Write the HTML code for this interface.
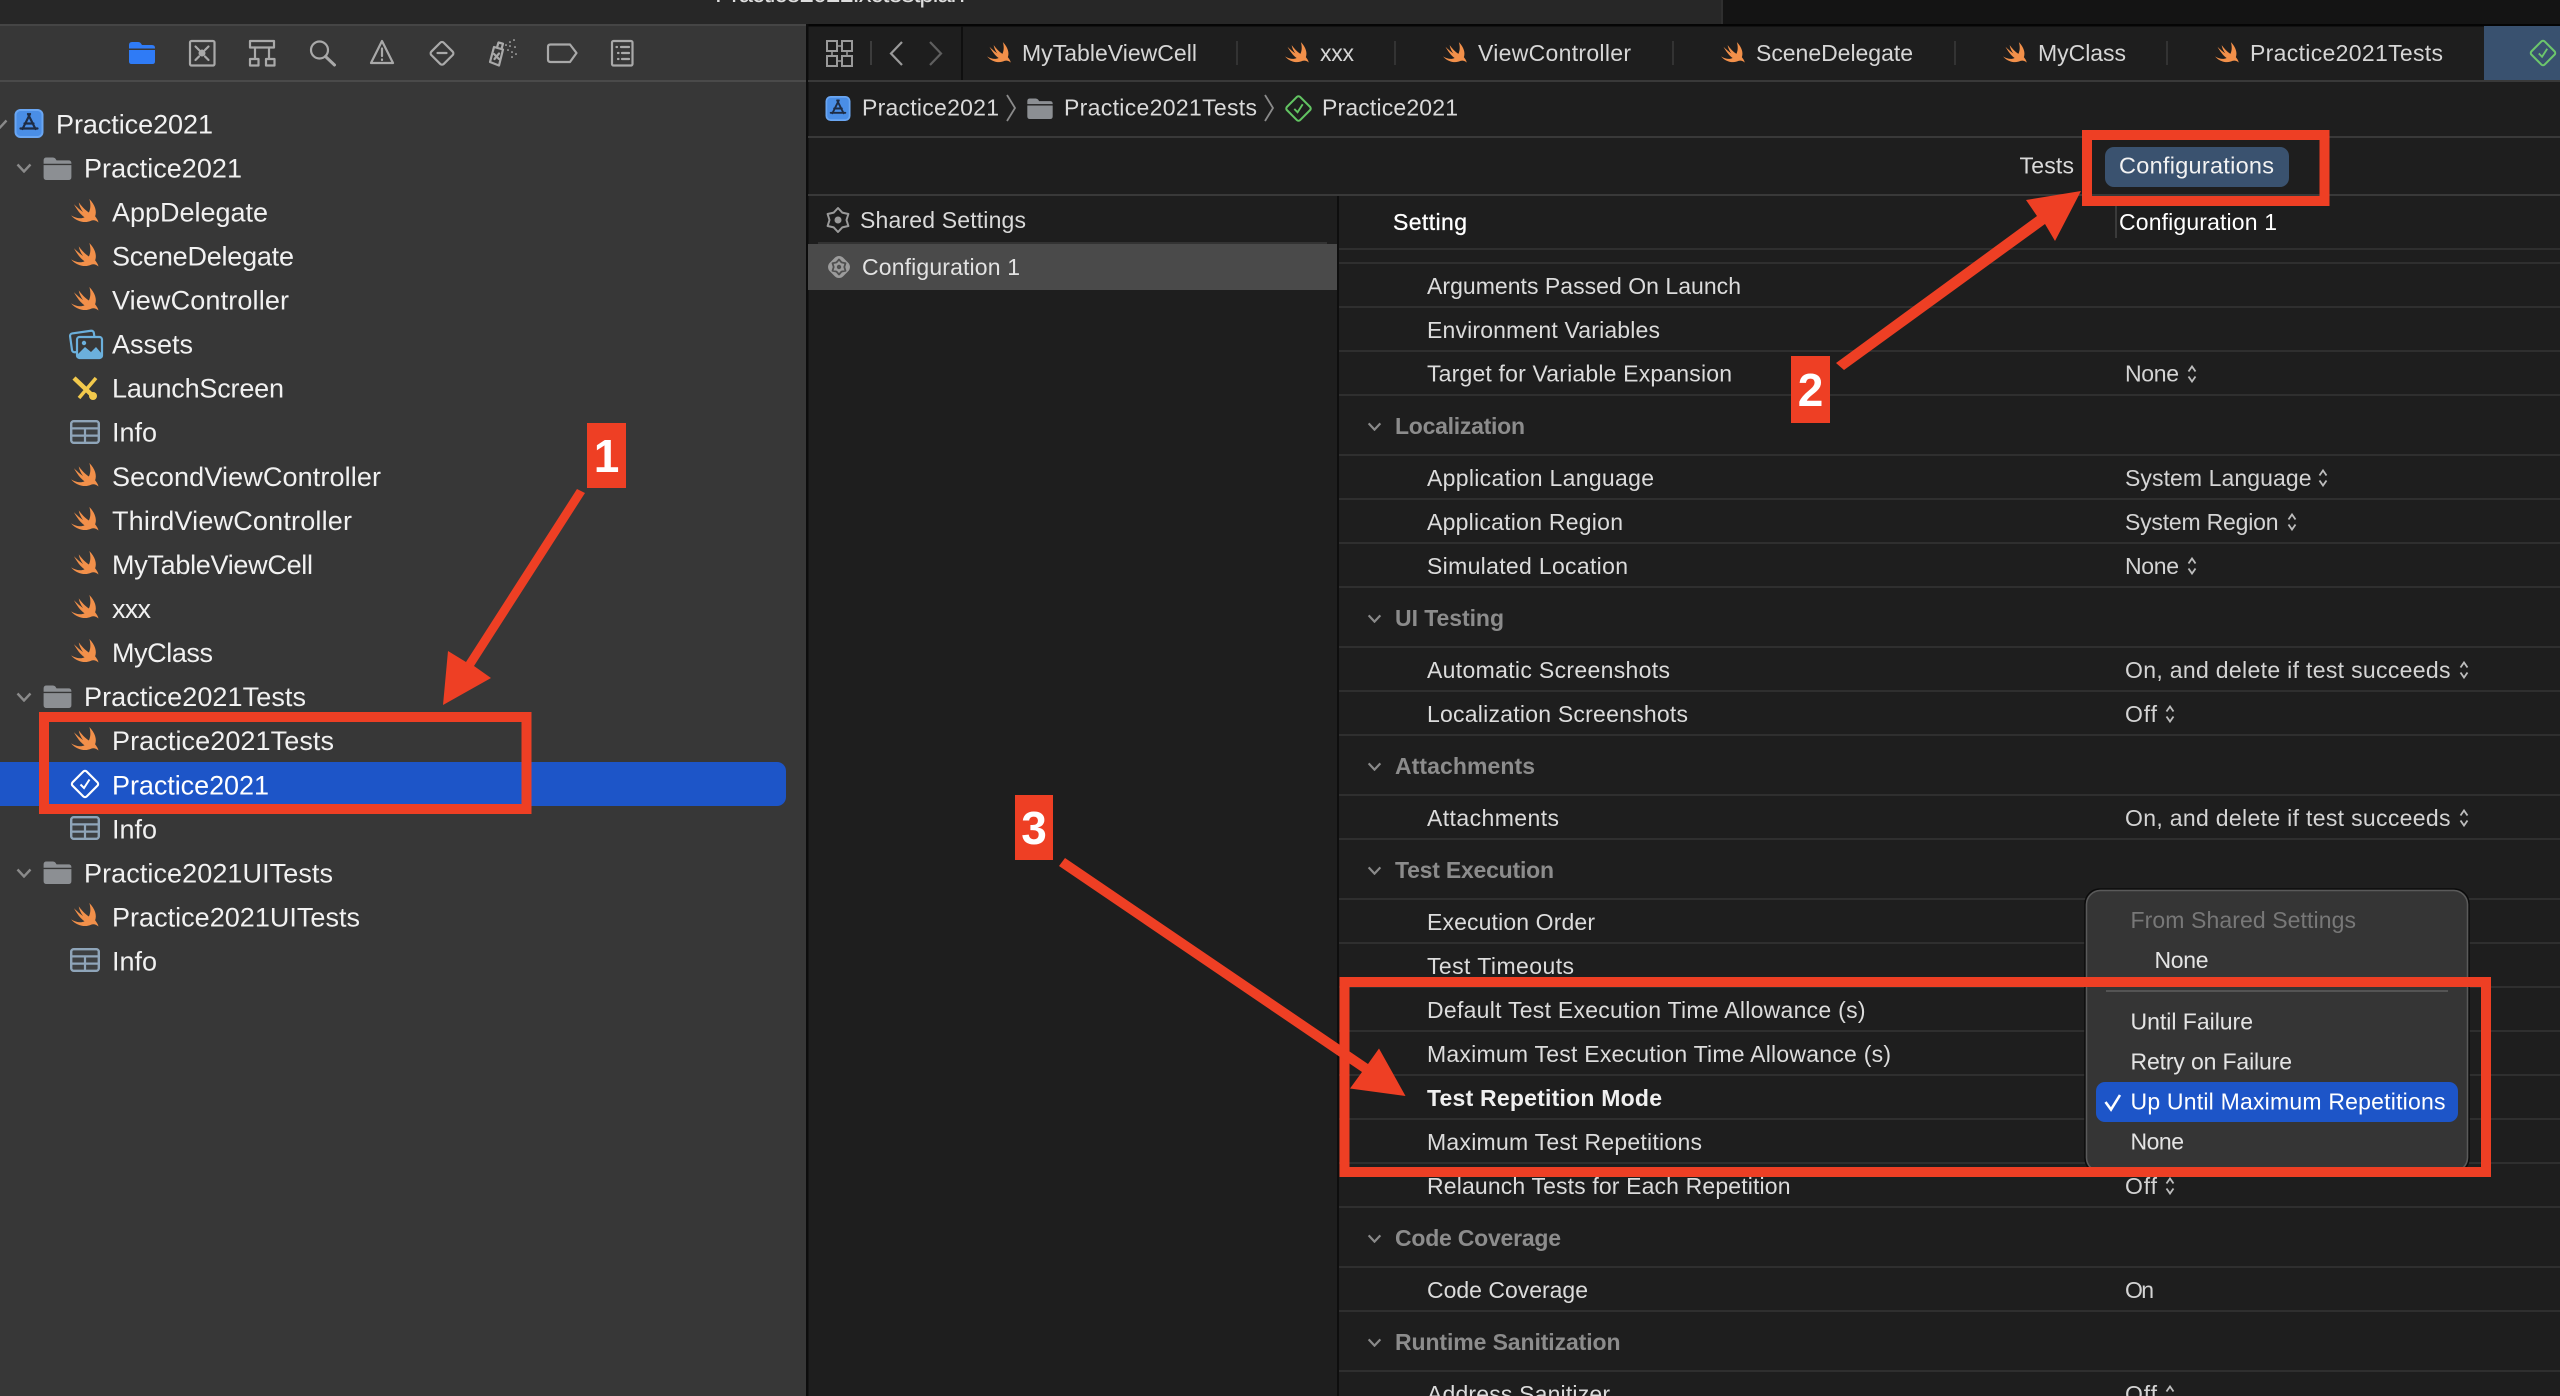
<!DOCTYPE html>
<html lang="en"><head><meta charset="utf-8"><title>Practice2021.xctestplan</title>
<style>
html,body{margin:0;padding:0;background:#1e1e1e;width:2560px;height:1396px;overflow:hidden}
svg{display:block}
text{font-family:"Liberation Sans",sans-serif}
.s{font-size:27px;fill:#f1f1f1}
.t{font-size:23px;fill:#d6d6d6}
.b{font-size:23px;fill:#dadada}
.r{font-size:23px;fill:#dcdcdc}
.h{font-size:23px;fill:#8c8c8c;font-weight:bold}
.v{font-size:23px;fill:#d4d4d4}
.m{font-size:23px;fill:#e4e4e4}
.tb{stroke:#a9a9a9;stroke-width:2.2;fill:none;stroke-linejoin:round;stroke-linecap:round}
.ln{fill:#2f2f2f}
</style></head><body>
<svg xmlns="http://www.w3.org/2000/svg" width="2560" height="1396" viewBox="0 0 2560 1396">
<defs>
<symbol id="swift" viewBox="0 0 30 26"><path fill="#f2904a" d="M19 0C25 6 27 13 25 18C26.5 20 28 22 28.5 24.5C26.5 22.5 23.5 21.5 21 22.5C15 25.5 6 24 0 17C5 20 10 21 14 19C10 16.5 6 11 3 5.5C6.5 9 10 12 12.5 13.5C10.5 11 8.5 7 8 3.5C11 7.5 14.5 11.5 18.5 14C20.5 10 20.5 5 19 0Z"/></symbol>
<symbol id="folder" viewBox="0 0 29 24"><path fill="#8c8f93" d="M0 3.5Q0 0.5 3 0.5H9.5Q11.5 0.5 12.5 2L13.5 3.5H26Q29 3.5 29 6.5V7H0ZM0 8.5H29V21Q29 24 26 24H3Q0 24 0 21Z"/></symbol>
<symbol id="info" viewBox="0 0 30 24"><rect x="1.2" y="1.2" width="27.6" height="21.6" rx="2.5" fill="#4a525a" fill-opacity=".35" stroke="#8fa5b9" stroke-width="2.4"/><path d="M1 8.4H29M1 15.6H29M15 8.4V23" stroke="#8fa5b9" stroke-width="2.2" fill="none"/></symbol>
<symbol id="app" viewBox="0 0 29 29"><rect x="1" y="1" width="27" height="27" rx="5" fill="#4a8ee6" stroke="#6aa6f2" stroke-width="2"/><path d="M15.5 5L8 20M13.5 5L21 20M6 19.5H23M10 14.5H19" stroke="#1e2c44" stroke-width="2.2" fill="none" stroke-linecap="round"/></symbol>
<symbol id="diamond" viewBox="0 0 30 30"><rect x="5" y="5" width="20" height="20" rx="2.5" transform="rotate(45 15 15)" fill="none" stroke="currentColor" stroke-width="2.2"/><path d="M10.5 15.5L14 19L19.5 10.5" fill="none" stroke="currentColor" stroke-width="2"/></symbol>
<symbol id="updn" viewBox="0 0 10 20"><path d="M1.5 7.5L5 2.5L8.5 7.5M1.5 12.5L5 17.5L8.5 12.5" fill="none" stroke="#bdbdbd" stroke-width="1.8"/></symbol>
<symbol id="chev" viewBox="0 0 16 10"><path d="M1.5 1.5L8 8.5L14.5 1.5" fill="none" stroke="#8a8a8a" stroke-width="2.4"/></symbol>
</defs>

<!-- backgrounds -->
<rect width="2560" height="1396" fill="#1e1e1e"/>
<rect width="1722" height="24" fill="#272727"/>
<rect x="1722" width="838" height="24" fill="#141414"/>
<rect x="1721" width="2" height="24" fill="#2f2f2f"/>
<rect y="24" x="806" width="1754" height="2.5" fill="#050505"/>
<rect y="24" width="806" height="2.5" fill="#454545"/>
<rect y="26" width="806" height="1370" fill="#373737"/>
<rect x="806" y="24" width="2.5" height="1372" fill="#0c0c0c"/>
<rect y="80" width="806" height="2" fill="#4a4a4a"/>
<text x="715" y="2" font-size="26" fill="#dedede" textLength="250">Practice2021.xctestplan</text>

<!-- sidebar toolbar icons -->
<path fill="#2f7bf6" d="M129 45Q129 42 132 42H138Q140 42 141 43.5L142 45H152Q155 45 155 48V48.5H129ZM129 50H155V61.5Q155 64 152.5 64H131.5Q129 64 129 61.5Z"/>
<g class="tb">
<rect x="190" y="41" width="24.5" height="24.5" rx="1.5"/>
<path d="M195.5 46.5L199 50M208.5 46.5L205 50M195.5 60L199 56.5M208.5 60L205 56.5"/>
<rect x="250" y="41" width="24" height="6.5"/>
<path d="M255 47.5V59M269 47.5V59"/>
<rect x="250" y="59" width="8.5" height="6.5"/><rect x="266" y="59" width="8.5" height="6.5"/>
<circle cx="319.5" cy="50" r="8.5"/><path d="M325.5 56.5L334.5 65" stroke-width="3"/>
<path d="M382 41L393 63H371Z"/><path d="M382 48.5V56M382 59.5V60"/>
<rect x="433.5" y="44.5" width="17.5" height="17.5" rx="2.5" transform="rotate(45 442 53)"/><path d="M437.5 53H446.5"/>
<path d="M490 62L494 47L503 49.5L499 65.5Z M497 47.5L498.5 42.5L503 43.7L501.5 49"/><path d="M494 54L499 59M499 53.5L494.5 59"/>
<path d="M506 45V45.1M510 42V42.1M514 40V40.1M510 46V46.1M515 47V47.1M508 50V50.1M512 52V52.1M516 54V54.1M512 57V57.1" stroke-width="1.8"/>
<path d="M550.5 44.5H570L576.5 53L570 62H550.5Q548 62 548 59.5V47Q548 44.5 550.5 44.5Z"/>
<rect x="612" y="41" width="20.5" height="24.5" rx="1.5"/>
<path d="M616.5 47H617M621 47H629M618 53H618.5M622 53H629M618 59H618.5M622 59H629"/>
</g>
<circle cx="202" cy="53" r="3.5" fill="#a9a9a9"/>

<!-- sidebar tree -->
<rect y="762" width="786" height="44" rx="9" fill="#1d55c8"/>
<rect y="762" width="20" height="44" fill="#1d55c8"/>
<use href="#chev" x="-8" y="119" width="16" height="10"/>
<use href="#chev" x="16" y="163" width="16" height="10"/>
<use href="#chev" x="16" y="692" width="16" height="10"/>
<use href="#chev" x="16" y="868" width="16" height="10"/>
<use href="#app" x="14.5" y="109" width="29" height="29"/>
<use href="#folder" x="43" y="157" width="29" height="23"/>
<use href="#folder" x="43" y="685" width="29" height="23"/>
<use href="#folder" x="43" y="861" width="29" height="23"/>
<use href="#swift" x="71" y="199" width="29" height="25"/>
<use href="#swift" x="71" y="243" width="29" height="25"/>
<use href="#swift" x="71" y="287" width="29" height="25"/>
<g>
<rect x="71" y="332" width="24" height="19" rx="2.5" transform="rotate(-8 83 342)" fill="none" stroke="#6bb0dc" stroke-width="2.2"/>
<rect x="77" y="337" width="25" height="21" rx="2.5" fill="#373737" stroke="#6bb0dc" stroke-width="2.2"/>
<path d="M77 355L85 347L91 352L96 347L102 354V358H77Z" fill="#6bb0dc"/><circle cx="84" cy="343" r="2.2" fill="#6bb0dc"/>
</g>
<g>
<path d="M74 378L94 397" stroke="#f2c94c" stroke-width="4.5"/>
<path d="M96 378L79 398" stroke="#f2c94c" stroke-width="3.5"/>
<circle cx="93" cy="396" r="4" fill="#f2c94c"/>
</g>
<use href="#info" x="70" y="420" width="30" height="24"/>
<use href="#swift" x="71" y="463" width="29" height="25"/>
<use href="#swift" x="71" y="507" width="29" height="25"/>
<use href="#swift" x="71" y="551" width="29" height="25"/>
<use href="#swift" x="71" y="595" width="29" height="25"/>
<use href="#swift" x="71" y="639" width="29" height="25"/>
<use href="#swift" x="71" y="727" width="29" height="25"/>
<use href="#diamond" x="70" y="769" width="30" height="30" color="#ffffff"/>
<use href="#info" x="70" y="816" width="30" height="24"/>
<use href="#swift" x="71" y="903" width="29" height="25"/>
<use href="#info" x="70" y="948" width="30" height="24"/>
<g transform="translate(0,.5)">
<text class="s" x="56" y="133" textLength="157">Practice2021</text>
<text class="s" x="84" y="177" textLength="158">Practice2021</text>
<text class="s" x="112" y="221" textLength="156">AppDelegate</text>
<text class="s" x="112" y="265" textLength="182">SceneDelegate</text>
<text class="s" x="112" y="309" textLength="177">ViewController</text>
<text class="s" x="112" y="353" textLength="81">Assets</text>
<text class="s" x="112" y="397" textLength="172">LaunchScreen</text>
<text class="s" x="112" y="441" textLength="45">Info</text>
<text class="s" x="112" y="485.5" textLength="269">SecondViewController</text>
<text class="s" x="112" y="529.5" textLength="240">ThirdViewController</text>
<text class="s" x="112" y="573.5" textLength="201">MyTableViewCell</text>
<text class="s" x="112" y="617.5" textLength="39">xxx</text>
<text class="s" x="112" y="661.5" textLength="101">MyClass</text>
<text class="s" x="84" y="705.5" textLength="222">Practice2021Tests</text>
<text class="s" x="112" y="749.5" textLength="222">Practice2021Tests</text>
<text class="s" x="112" y="794" textLength="157" style="fill:#fff">Practice2021</text>
<text class="s" x="112" y="838" textLength="45">Info</text>
<text class="s" x="84" y="882" textLength="249">Practice2021UITests</text>
<text class="s" x="112" y="926" textLength="248">Practice2021UITests</text>
<text class="s" x="112" y="970" textLength="45">Info</text>
</g>

<!-- tab bar -->
<rect x="808" y="80" width="1752" height="2" fill="#393939"/>
<rect x="2484" y="26" width="76" height="54" fill="#39516f"/>
<rect x="961" y="26" width="2" height="54" fill="#0f0f0f"/>
<g fill="none" stroke="#9a9a9a" stroke-width="2">
<path d="M827 41H837V51H827ZM842 41H852V51H842ZM827 56H837V66H827ZM842 56H852V66H842Z"/>
<path d="M837 46H842M847 51V56M832 51V56M837 61H842" stroke-width="1.5"/>
</g>
<rect x="870" y="41" width="2" height="24" fill="#3c3c3c"/>
<path d="M902 42L891 53.5L902 65" fill="none" stroke="#9a9a9a" stroke-width="2.2"/>
<path d="M930 42L941 53.5L930 65" fill="none" stroke="#5f5f5f" stroke-width="2.2"/>
<g fill="#333">
<rect x="1236" y="41" width="2" height="24"/><rect x="1394" y="41" width="2" height="24"/><rect x="1672" y="41" width="2" height="24"/><rect x="1954" y="41" width="2" height="24"/><rect x="2166" y="41" width="2" height="24"/>
</g>
<use href="#swift" x="987" y="42" width="25" height="22"/>
<use href="#swift" x="1285" y="42" width="25" height="22"/>
<use href="#swift" x="1443" y="42" width="25" height="22"/>
<use href="#swift" x="1721" y="42" width="25" height="22"/>
<use href="#swift" x="2003" y="42" width="25" height="22"/>
<use href="#swift" x="2215" y="42" width="25" height="22"/>
<use href="#diamond" x="2529" y="39" width="28" height="28" color="#6cc66c"/>
<text class="t" x="1022" y="61" textLength="175">MyTableViewCell</text>
<text class="t" x="1320" y="61" textLength="34">xxx</text>
<text class="t" x="1478" y="61" textLength="153">ViewController</text>
<text class="t" x="1756" y="61" textLength="157">SceneDelegate</text>
<text class="t" x="2038" y="61" textLength="88">MyClass</text>
<text class="t" x="2250" y="61" textLength="193">Practice2021Tests</text>

<!-- breadcrumb -->
<rect x="808" y="136" width="1752" height="2" fill="#393939"/>
<use href="#app" x="825.5" y="96" width="25" height="25"/>
<text class="b" x="862" y="115.5" textLength="137">Practice2021</text>
<path d="M1007 95L1015 108L1007 121" fill="none" stroke="#8a8a8a" stroke-width="1.8"/>
<use href="#folder" x="1027" y="98" width="26" height="21"/>
<text class="b" x="1064" y="115.5" textLength="193">Practice2021Tests</text>
<path d="M1265 95L1273 108L1265 121" fill="none" stroke="#8a8a8a" stroke-width="1.8"/>
<use href="#diamond" x="1284.5" y="94.5" width="28" height="28" color="#62c462"/>
<text class="b" x="1322" y="115.5" textLength="136">Practice2021</text>

<!-- segment row -->
<rect x="808" y="194" width="1752" height="2" fill="#393939"/>
<text class="b" x="2019.5" y="173.5" textLength="54.5">Tests</text>
<rect x="2105" y="147" width="184" height="40" rx="9" fill="#3a526f"/>
<text x="2119" y="173.5" font-size="23.5" fill="#f2f2f2" textLength="155">Configurations</text>

<!-- configs list -->
<rect x="1337" y="196" width="2" height="1200" fill="#0e0e0e"/>
<rect x="818" y="242" width="509" height="2" fill="#333"/>
<rect x="808" y="244" width="529" height="46" fill="#4a4a4a"/>
<polygon points="838,208 842.25,212.6 848.4,214 846.5,220 848.4,226 842.25,227.4 838,232 833.75,227.4 827.6,226 829.5,220 827.6,214 833.75,212.6" fill="none" stroke="#9a9a9a" stroke-width="2" stroke-linejoin="round"/>
<circle cx="838" cy="220" r="3.5" fill="#9a9a9a"/>
<rect x="829.5" y="257.5" width="19" height="19" rx="6" transform="rotate(45 839 267)" fill="#9c9c9c"/>
<polygon points="839,259.5 841.5,262.4 845.5,263.2 844.3,267 845.5,270.8 841.5,271.6 839,274.5 836.5,271.6 832.5,270.8 833.7,267 832.5,263.2 836.5,262.4" fill="none" stroke="#4f4f4f" stroke-width="1.8" stroke-linejoin="round"/>
<circle cx="839" cy="267" r="2.2" fill="#4f4f4f"/>
<text class="b" x="860" y="228" textLength="166">Shared Settings</text>
<text class="b" x="862" y="275" textLength="158" style="fill:#e2e2e2">Configuration 1</text>

<!-- settings table -->
<text x="1393" y="230" font-size="23" fill="#fff" textLength="74" stroke="#fff" stroke-width=".3">Setting</text>
<rect x="2115" y="206" width="2" height="32" fill="#3a3a3a"/>
<text x="2119" y="230" font-size="23" fill="#fff" textLength="158">Configuration 1</text>
<g class="ln">
<rect x="1339" y="248" width="1221" height="2"/><rect x="1339" y="262" width="1221" height="2"/>
<rect x="1339" y="306" width="1221" height="2"/><rect x="1339" y="350" width="1221" height="2"/><rect x="1339" y="394" width="1221" height="2"/>
<rect x="1339" y="454" width="1221" height="2"/><rect x="1339" y="498" width="1221" height="2"/><rect x="1339" y="542" width="1221" height="2"/><rect x="1339" y="586" width="1221" height="2"/>
<rect x="1339" y="646" width="1221" height="2"/><rect x="1339" y="690" width="1221" height="2"/><rect x="1339" y="734" width="1221" height="2"/>
<rect x="1339" y="794" width="1221" height="2"/><rect x="1339" y="838" width="1221" height="2"/>
<rect x="1339" y="898" width="1221" height="2"/><rect x="1339" y="942" width="1221" height="2"/><rect x="1339" y="986" width="1221" height="2"/><rect x="1339" y="1030" width="1221" height="2"/><rect x="1339" y="1074" width="1221" height="2"/><rect x="1339" y="1118" width="1221" height="2"/><rect x="1339" y="1162" width="1221" height="2"/><rect x="1339" y="1206" width="1221" height="2"/>
<rect x="1339" y="1266" width="1221" height="2"/><rect x="1339" y="1310" width="1221" height="2"/><rect x="1339" y="1370" width="1221" height="2"/>
</g>
<use href="#chev" x="1367" y="422" width="15" height="9"/>
<use href="#chev" x="1367" y="614" width="15" height="9"/>
<use href="#chev" x="1367" y="762" width="15" height="9"/>
<use href="#chev" x="1367" y="866" width="15" height="9"/>
<use href="#chev" x="1367" y="1234" width="15" height="9"/>
<use href="#chev" x="1367" y="1338" width="15" height="9"/>
<text class="h" x="1395" y="434" textLength="130">Localization</text>
<text class="h" x="1395" y="626" textLength="109">UI Testing</text>
<text class="h" x="1395" y="774" textLength="140">Attachments</text>
<text class="h" x="1395" y="878" textLength="159">Test Execution</text>
<text class="h" x="1395" y="1246" textLength="166">Code Coverage</text>
<text class="h" x="1395" y="1350" textLength="225.5">Runtime Sanitization</text>

<text class="r" x="1427" y="294" textLength="314">Arguments Passed On Launch</text>
<text class="r" x="1427" y="338" textLength="233">Environment Variables</text>
<text class="r" x="1427" y="381.5" textLength="305">Target for Variable Expansion</text>
<text class="r" x="1427" y="486" textLength="227">Application Language</text>
<text class="r" x="1427" y="530" textLength="196">Application Region</text>
<text class="r" x="1427" y="574" textLength="201">Simulated Location</text>
<text class="r" x="1427" y="678" textLength="243">Automatic Screenshots</text>
<text class="r" x="1427" y="722" textLength="261">Localization Screenshots</text>
<text class="r" x="1427" y="826" textLength="132">Attachments</text>
<text class="r" x="1427" y="930" textLength="168">Execution Order</text>
<text class="r" x="1427" y="974" textLength="147">Test Timeouts</text>
<text class="r" x="1427" y="1018" textLength="438.5">Default Test Execution Time Allowance (s)</text>
<text class="r" x="1427" y="1062" textLength="464">Maximum Test Execution Time Allowance (s)</text>
<text class="r" x="1427" y="1106" textLength="235" font-weight="bold" style="fill:#f0f0f0">Test Repetition Mode</text>
<text class="r" x="1427" y="1150" textLength="275">Maximum Test Repetitions</text>
<text class="r" x="1427" y="1194" textLength="363.5">Relaunch Tests for Each Repetition</text>
<text class="r" x="1427" y="1298" textLength="161">Code Coverage</text>
<text class="r" x="1427" y="1402" textLength="183">Address Sanitizer</text>

<text class="v" x="2125" y="381.5" textLength="54">None</text><use href="#updn" x="2187" y="364" width="10" height="20"/>
<text class="v" x="2125" y="486" textLength="186.5">System Language</text><use href="#updn" x="2318" y="468" width="10" height="20"/>
<text class="v" x="2125" y="530" textLength="153.5">System Region</text><use href="#updn" x="2287" y="512" width="10" height="20"/>
<text class="v" x="2125" y="574" textLength="54">None</text><use href="#updn" x="2187" y="556" width="10" height="20"/>
<text class="v" x="2125" y="678" textLength="325.5">On, and delete if test succeeds</text><use href="#updn" x="2459" y="660" width="10" height="20"/>
<text class="v" x="2125" y="722" textLength="32">Off</text><use href="#updn" x="2165" y="704" width="10" height="20"/>
<text class="v" x="2125" y="826" textLength="325.5">On, and delete if test succeeds</text><use href="#updn" x="2459" y="808" width="10" height="20"/>
<text class="v" x="2125" y="1194" textLength="32">Off</text><use href="#updn" x="2165" y="1176" width="10" height="20"/>
<text class="v" x="2125" y="1298" textLength="29">On</text>
<text class="v" x="2125" y="1402" textLength="32">Off</text><use href="#updn" x="2165" y="1384" width="10" height="20"/>

<!-- dropdown -->
<rect x="2085" y="889" width="384" height="284" rx="15" fill="#353535" stroke="#0b0b0b" stroke-width="1.5"/>
<rect x="2086.5" y="890.5" width="381" height="281" rx="14" fill="#353535" stroke="#5a5a5a" stroke-width="1.5"/>
<rect x="2106" y="990" width="342" height="2" fill="#545454"/>
<rect x="2096" y="1082" width="362" height="40" rx="9" fill="#1d55c8"/>
<text class="m" x="2130.5" y="928" textLength="225.5" style="fill:#787878">From Shared Settings</text>
<text class="m" x="2154.5" y="968" textLength="54">None</text>
<text class="m" x="2130.5" y="1029.5" textLength="122.5">Until Failure</text>
<text class="m" x="2130.5" y="1069.5" textLength="161.5">Retry on Failure</text>
<path d="M2105.5 1102L2111 1109.5L2120 1095" fill="none" stroke="#fff" stroke-width="2.6"/>
<text class="m" x="2130.5" y="1109.5" textLength="315" style="fill:#fff">Up Until Maximum Repetitions</text>
<text class="m" x="2130.5" y="1149.5" textLength="53.5">None</text>

<!-- annotations -->
<g fill="none" stroke="#ee3f24" stroke-width="10">
<rect x="44" y="717" width="482.5" height="92"/>
<rect x="2087" y="135" width="237.5" height="66"/>
<rect x="1344.5" y="982" width="1141.5" height="190"/>
</g>
<g fill="#ee3f24">
<polygon points="585,493 577,489 466,662 448,651 443,705 491,678 474,666"/>
<polygon points="1836,363 1844,370 2045,224 2055,241 2081,191 2026,200 2037,216"/>
<polygon points="1065,858 1059,866 1362,1072 1350,1088.5 1405.5,1096 1379,1048.5 1368,1064"/>
<rect x="587" y="423" width="39" height="65"/>
<rect x="1791" y="356" width="39" height="67"/>
<rect x="1015" y="795" width="38" height="65"/>
</g>
<g font-weight="bold" font-size="46" fill="#fff" text-anchor="middle">
<text x="606.5" y="472">1</text>
<text x="1810.5" y="406">2</text>
<text x="1034" y="844">3</text>
</g>
</svg>
</body></html>
